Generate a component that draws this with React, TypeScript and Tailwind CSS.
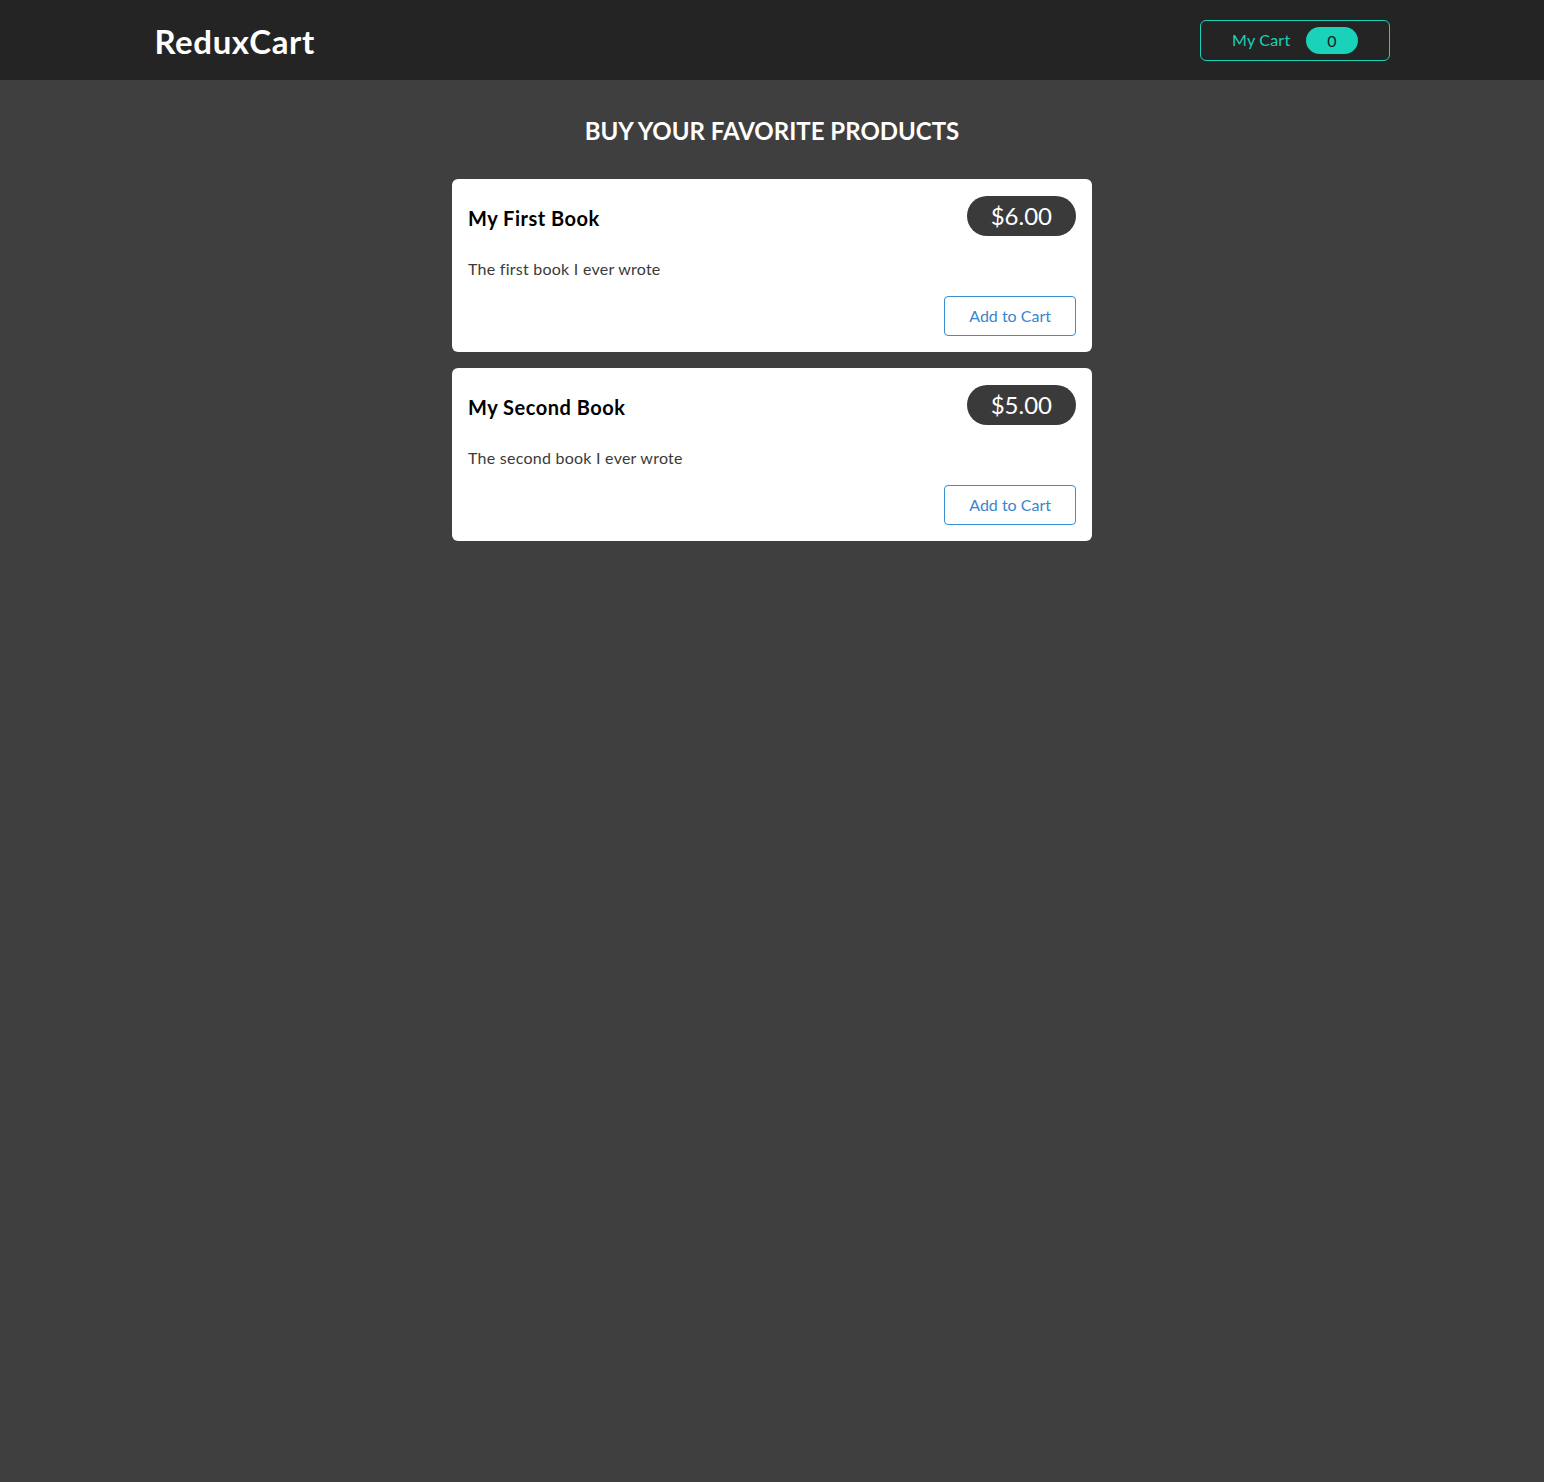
const products = [
  { id: "p1", title: "My First Book", price: 6, description: "The first book I ever wrote" },
  { id: "p2", title: "My Second Book", price: 5, description: "The second book I ever wrote" },
]

function CartButton() {
  return (
    <button className="flex items-center rounded-md border border-[#1ad1b9] bg-transparent px-[31px] py-[6px] text-base text-[#1ad1b9]">
      <span className="tracking-[0.2px]">My Cart</span>
      <span className="ml-4 rounded-[30px] bg-[#1ad1b9] px-[21px] py-[2px] leading-[23px] text-[#1d1d1d]">0</span>
    </button>
  )
}

function ProductItem({ title, price, description }: { title: string; price: number; description: string }) {
  return (
    <li className="rounded-md bg-white p-4">
      <header className="flex items-center justify-between">
        <h3 className="my-2 text-[20px] font-bold tracking-[0.5px] text-black">{title}</h3>
        <div className="-mt-1 rounded-[30px] bg-[#3a3a3a] px-6 py-[2px] text-[24px] leading-[36px] text-white">
          ${price.toFixed(2)}
        </div>
      </header>
      <p className="mb-[15px] mt-4 text-base tracking-[0.25px] text-[#3a3a3a]">{description}</p>
      <div className="flex justify-end">
        <button className="rounded-[4px] border border-[#3a8fd0] bg-transparent px-6 py-[7px] text-base leading-6 text-[#3a85cc]">
          Add to Cart
        </button>
      </div>
    </li>
  )
}

export default function App() {
  return (
    <div className="min-h-[1482px] bg-[#3f3f3f] font-['Lato','Liberation_Sans',sans-serif]">
      <header className="flex h-20 items-center justify-between bg-[#252424] px-[10%]">
        <h1 className="mt-1 text-[33px] font-bold tracking-[0.6px] text-white">ReduxCart</h1>
        <CartButton />
      </header>
      <main className="mx-auto w-[640px] pt-[33px]">
        <h2 className="mb-[30px] text-center text-[24px] font-bold uppercase text-white">Buy your favorite products</h2>
        <ul className="flex flex-col gap-4">
          {products.map((p) => (
            <ProductItem key={p.id} title={p.title} price={p.price} description={p.description} />
          ))}
        </ul>
      </main>
    </div>
  )
}
